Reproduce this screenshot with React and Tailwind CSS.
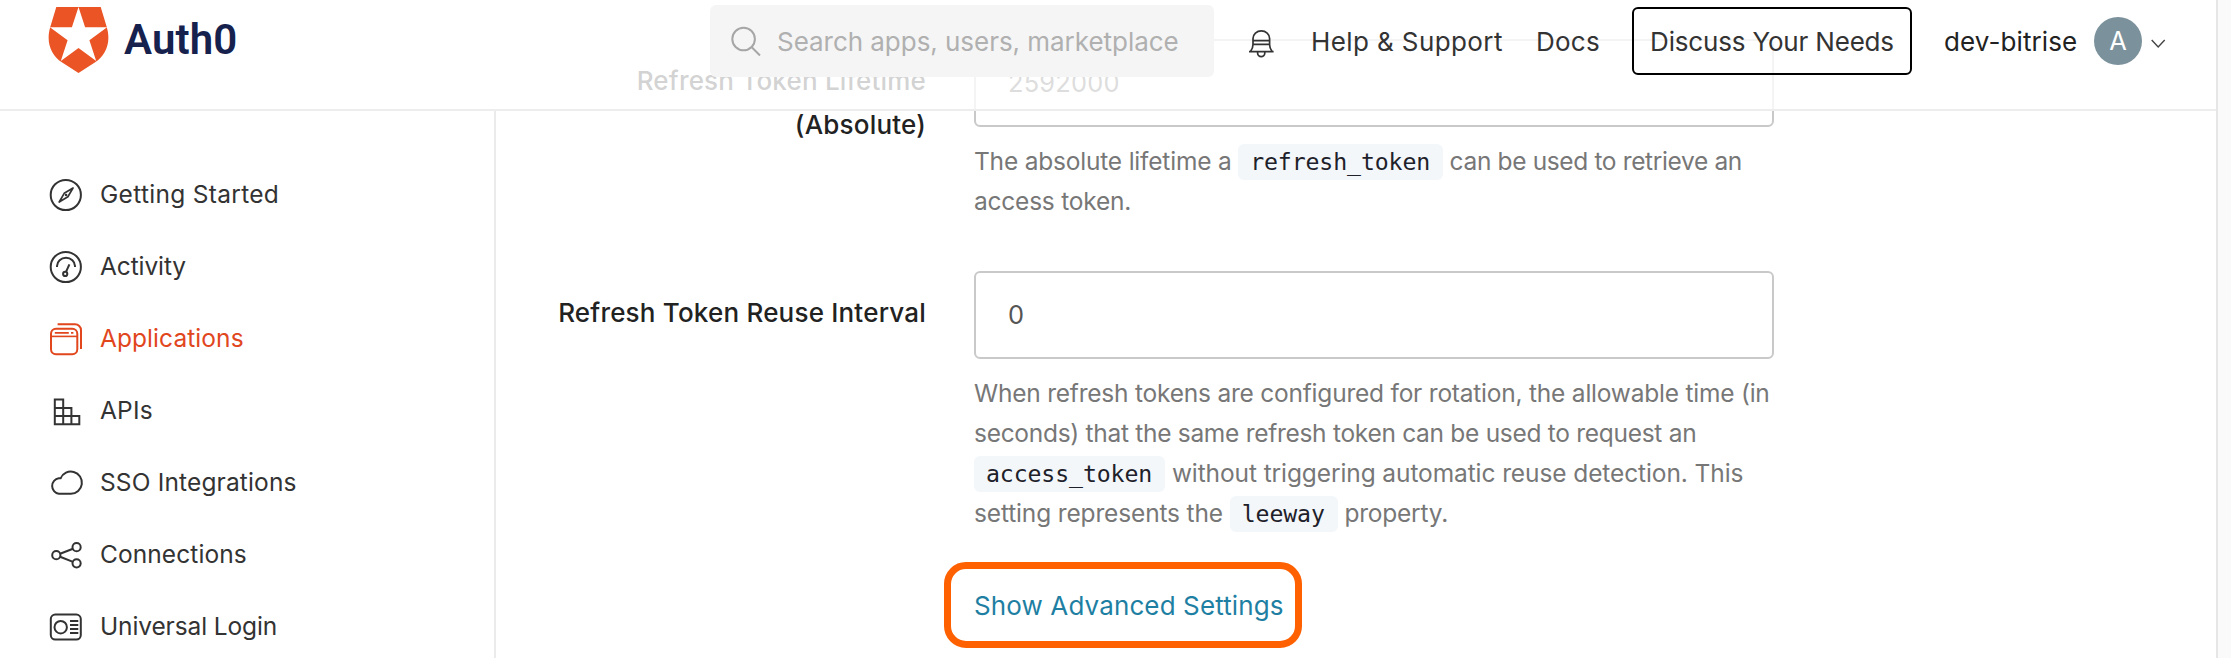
const navItems = [
  { label: "Getting Started", icon: CompassIcon, tracking: "tracking-[0.3px]" },
  { label: "Activity", icon: GaugeIcon, tracking: "tracking-[-0.1px]" },
  { label: "Applications", icon: WindowsIcon, active: true, tracking: "tracking-[0.07px]" },
  { label: "APIs", icon: BlocksIcon, tracking: "tracking-[0.2px]" },
  { label: "SSO Integrations", icon: CloudIcon, tracking: "tracking-[0.15px]" },
  { label: "Connections", icon: ShareIcon, tracking: "tracking-[0.08px]" },
  { label: "Universal Login", icon: IdCardIcon, tracking: "tracking-[-0.12px]" },
];

function Icon({ children }) {
  return (
    <svg className="h-9 w-9 shrink-0" viewBox="0 0 36 36" fill="none" stroke="currentColor" strokeWidth="2" strokeLinejoin="round">
      {children}
    </svg>
  );
}

function CompassIcon() {
  return (
    <Icon>
      <circle cx="17.8" cy="18" r="15.1" />
      <path d="M25 11 19.9 19.7 11.2 25 16.2 16.3Z" strokeWidth="1.7" />
      <circle cx="18.1" cy="18" r="1.3" fill="currentColor" stroke="none" />
    </Icon>
  );
}

function GaugeIcon() {
  return (
    <Icon>
      <circle cx="17.8" cy="18" r="15.1" />
      <path d="M9 18v-1a9 8.2 0 0 1 18 0v1" />
      <circle cx="17.2" cy="24.9" r="2.1" />
      <path d="M18 22.8 21.4 15.4" />
    </Icon>
  );
}

function WindowsIcon() {
  return (
    <Icon>
      <rect x="3" y="7.8" width="26.3" height="25.4" rx="5" />
      <path d="M3 15.4h26.3" strokeWidth="1.6" />
      <path d="M6.8 11.8h14M23 11.8h2.4" strokeWidth="1.8" />
      <path d="M9.6 3.2H27a6 6 0 0 1 6 6V28" />
    </Icon>
  );
}

function BlocksIcon() {
  return (
    <Icon>
      <path d="M6.8 6.4h8.4v8.5h8.2v8.1h7.9v8.3H6.8ZM6.8 14.9h8.4v16.4M6.8 23h16.6v8.3" strokeLinejoin="miter" />
    </Icon>
  );
}

function CloudIcon() {
  return (
    <Icon>
      <path d="M10.8 28.8a7.9 7.9 0 0 1 0-15.6c.7 0 1.2 0 1.8.1a11.1 11.1 0 1 1 10.3 15.5Z" />
    </Icon>
  );
}

function ShareIcon() {
  return (
    <Icon>
      <circle cx="8.3" cy="18.2" r="4.1" />
      <circle cx="28.6" cy="10.2" r="4.1" />
      <circle cx="28.6" cy="26.3" r="4.1" />
      <path d="m12.1 16.7 12.9-5M12.1 19.7 25 24.9" />
    </Icon>
  );
}

function IdCardIcon() {
  return (
    <Icon>
      <rect x="2.8" y="5.6" width="30" height="25" rx="4.5" />
      <circle cx="12.7" cy="18.2" r="6.2" />
      <path d="M22 12h8.3M22 16h8.3M22 20h8.3M22 24h8.3" />
    </Icon>
  );
}

function Code({ children }) {
  return (
    <code className="inline-block h-9 rounded-md bg-[#f3f7fa] pr-[13px] pl-3 align-baseline font-['DejaVu_Sans_Mono',monospace] text-[23.2px] leading-9 tracking-[-0.12px] text-[#1e212a]">
      {children}
    </code>
  );
}

function Header() {
  return (
    <header className="absolute inset-x-0 top-0 flex h-[111px] items-start border-b-2 border-[#ededed] bg-white/80">
      <div className="flex h-[82px] w-[710px] shrink-0 items-start pt-[7px] pl-12">
        <svg className="h-[66px] w-[61px]" viewBox="0 0 61 66">
          <path fill="#eb5424" d="M8.3 0h44.4l5.9 19.5c4.9 15.9-.8 28.8-11.4 35.8L30.5 66 13.8 55.3C3.2 48.3-2.5 35.4 2.4 19.5Z" />
          <path fill="#fff" d="m30.5 0 6.6 20.3h22l-17.7 12.9 6.8 20.7-17.7-12.8-17.7 12.8 6.8-20.7L1.9 20.3h22Z" />
        </svg>
        <span className="pl-[15px] font-['Roboto',sans-serif] text-[42px] leading-[66px] font-semibold tracking-[0.1px] text-[#16214d]">Auth0</span>
      </div>

      <div className="mt-[5px] flex h-[72px] w-[504px] shrink-0 items-center rounded-md bg-[#f5f5f5] pl-[21px]">
        <svg className="h-[30px] w-[30px]" viewBox="0 0 30 30" fill="none" stroke="#a6a6a6" strokeWidth="2">
          <circle cx="12.6" cy="13" r="11.3" />
          <path d="m20.5 21 8.5 8.5" />
        </svg>
        <span className="pl-4 text-[26px] tracking-[-0.04px] text-[#b0b0b0]">Search apps, users, marketplace</span>
      </div>

      <div className="flex h-[82px] items-center text-[26px] whitespace-nowrap text-[#333]">
        <svg className="mt-2 ml-[34px] h-8 w-[27px]" viewBox="0 0 27 32" fill="none" stroke="currentColor" strokeWidth="1.7">
          <path d="M5 15.4V9.5a8.3 7.6 0 0 1 16.6 0v5.9c0 3 .9 4.9 2.5 7.1H2.5C4.1 20.3 5 18.4 5 15.4ZM5 11.7h16.6M5 15.4h16.6M1 22.6h24.6M9.6 23v1a3.6 3.6 0 0 0 7.2 0V23" />
        </svg>
        <span className="ml-[36px] w-[225px] tracking-[0.4px]">Help &amp; Support</span>
        <span className="w-24 tracking-[0.25px]">Docs</span>
        <span className="flex h-[68px] w-[280px] items-center justify-center rounded-md border-2 border-black tracking-[-0.18px]">Discuss Your Needs</span>
        <span className="ml-8 w-[150px] tracking-[0.1px] text-[#222]">dev-bitrise</span>
        <span className="flex h-12 w-12 items-center justify-center rounded-full bg-[#7b919c] text-[25.5px] text-white">A</span>
        <svg className="mt-1.5 ml-2 h-2.5 w-4" viewBox="0 0 16 10" fill="none" stroke="#444" strokeWidth="1.4">
          <path d="m1.7 1 6.5 7 6.5-7" />
        </svg>
      </div>
    </header>
  );
}

function Sidebar() {
  return (
    <nav className="mt-[111px] w-[496px] shrink-0 border-r-2 border-[#ebebeb] pt-12">
      {navItems.map(({ label, icon: Glyph, active, tracking }) => (
        <a key={label} className={`flex h-[72px] items-center pl-12 ${tracking} ${active ? "text-[#e1461d]" : "text-[#333]"}`}>
          <Glyph />
          <span className="pb-0.5 pl-4 text-[24.5px] leading-[34px]">{label}</span>
        </a>
      ))}
    </nav>
  );
}

function Field({ label, value, children }) {
  return (
    <div className="flex gap-12">
      <div className="w-[430px] shrink-0 pt-5 text-right text-[26px] leading-[44px] font-medium tracking-[0.2px] whitespace-nowrap text-[#222]">
        {label}
      </div>
      <div className="w-[800px]">
        <div className="flex h-22 items-center rounded-md border-2 border-[#c9c9c9] pl-8 text-[25.4px] tracking-[0.2px] text-[#555]">{value}</div>
        <div className="mt-3.5 text-[24.5px] leading-10 tracking-[-0.22px] whitespace-nowrap text-[#777]">{children}</div>
      </div>
    </div>
  );
}

export default function App() {
  return (
    <div className="flex h-[658px] w-[2231px] overflow-hidden bg-[#fafafa] font-['Inter',sans-serif]">
      <div className="relative flex w-[2218px] border-r-2 border-[#e6e6e6] bg-white">
        <Sidebar />
        <main className="flex flex-col pt-[39px]">
          <Field label={<><div>Refresh Token Lifetime</div><div>(Absolute)</div></>} value="2592000">
            <div>
              <span className="tracking-[-0.2px]">The absolute lifetime a </span>
              <Code>refresh_token</Code>
              <span className="tracking-[-0.36px]"> can be used to retrieve an</span>
            </div>
            <div>access token.</div>
          </Field>
          <div className="h-[50px] shrink-0" />
          <Field label="Refresh Token Reuse Interval" value="0">
            <div>When refresh tokens are configured for rotation, the allowable time (in</div>
            <div className="tracking-[-0.29px]">seconds) that the same refresh token can be used to request an</div>
            <div>
              <Code>access_token</Code>
              <span className="tracking-[-0.1px]"> without triggering automatic reuse detection. This</span>
            </div>
            <div>
              <span className="tracking-[-0.15px]">setting represents the </span>
              <Code>leeway</Code> property.
            </div>
          </Field>
          <a className="mt-[29px] ml-[448px] flex h-[86px] w-[358px] shrink-0 items-center rounded-[22px] border-[7px] border-[#ff6000] pl-[23px] text-[26px] tracking-[0.12px] whitespace-nowrap text-[#1e7fa3]">
            Show Advanced Settings
          </a>
        </main>
        <Header />
      </div>
    </div>
  );
}
